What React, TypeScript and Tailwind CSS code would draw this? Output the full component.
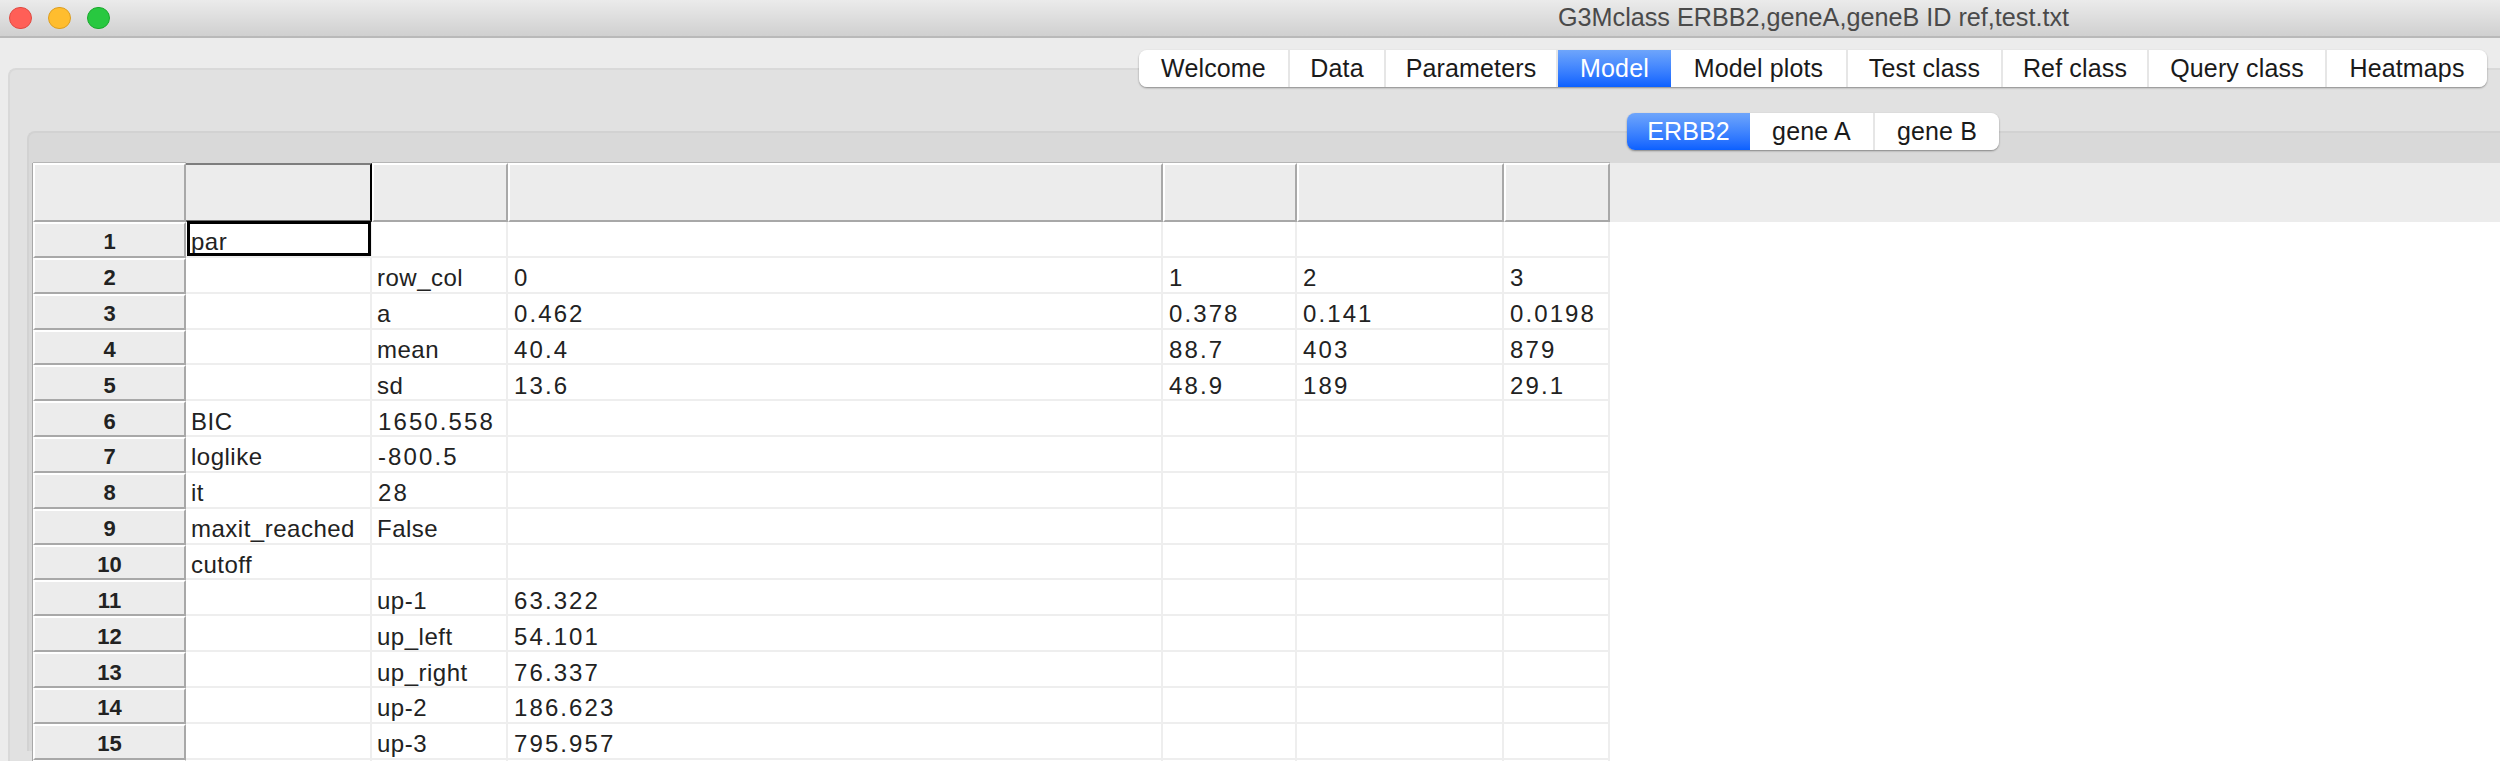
const font = "font-['Liberation_Sans',Arial,sans-serif]";

const mainTabs = [
  { label: "Welcome", w: "w-[151px]", first: true },
  { label: "Data", w: "w-[96px]" },
  { label: "Parameters", w: "w-[172px]" },
  { label: "Model", w: "w-[113px]", active: true },
  { label: "Model plots", w: "w-[177px]" },
  { label: "Test class", w: "w-[155px]" },
  { label: "Ref class", w: "w-[146px]" },
  { label: "Query class", w: "w-[178px]" },
  { label: "Heatmaps", w: "w-[160px]", last: true },
];

const subTabs = [
  { label: "ERBB2", w: "w-[123px]", active: true, first: true },
  { label: "gene A", w: "w-[125px]" },
  { label: "gene B", w: "w-[124px]", last: true },
];

const colW = ["w-[186px]", "w-[136px]", "w-[655px]", "w-[134px]", "w-[207px]", "w-[106px]"];

const rows: string[][] = [
  ["par", "", "", "", "", ""],
  ["", "row_col", "0", "1", "2", "3"],
  ["", "a", "0.462", "0.378", "0.141", "0.0198"],
  ["", "mean", "40.4", "88.7", "403", "879"],
  ["", "sd", "13.6", "48.9", "189", "29.1"],
  ["BIC", "1650.558", "", "", "", ""],
  ["loglike", "-800.5", "", "", "", ""],
  ["it", "28", "", "", "", ""],
  ["maxit_reached", "False", "", "", "", ""],
  ["cutoff", "", "", "", "", ""],
  ["", "up-1", "63.322", "", "", ""],
  ["", "up_left", "54.101", "", "", ""],
  ["", "up_right", "76.337", "", "", ""],
  ["", "up-2", "186.623", "", "", ""],
  ["", "up-3", "795.957", "", "", ""],
  ["", "", "", "", "", ""],
];

function Segmented({ tabs }: { tabs: { label: string; w: string; active?: boolean; first?: boolean; last?: boolean }[] }) {
  return (
    <div className="flex h-[37px] rounded-[8px] shadow-[0_1px_2px_rgba(0,0,0,0.4)]">
      {tabs.map((t) => (
        <div
          key={t.label}
          className={`${t.w} flex items-center justify-center text-[25px] leading-none tracking-[0.15px] ${
            t.first ? "rounded-l-[8px]" : ""
          } ${t.last ? "rounded-r-[8px]" : ""} ${
            t.active
              ? "bg-gradient-to-b from-[#6ea5fb] to-[#0a60ff] text-white"
              : `bg-white text-[#1a1a1a] ${t.last ? "" : "border-r-2 border-[#e6e6e6]"}`
          }`}
        >
          {t.label}
        </div>
      ))}
    </div>
  );
}

export default function App() {
  return (
    <div className={`${font} h-[761px] w-[2500px] overflow-hidden bg-[#ececec]`}>
      <div className="flex h-[38px] items-center border-b-2 border-[#b9b9b9] bg-gradient-to-b from-[#ebebeb] to-[#d0d0d0] pl-[9px]">
        <div className="flex gap-[16px]">
          <div className="h-[22px] w-[23px] rounded-full border border-[#e04a42] bg-[#ff5f57]" />
          <div className="h-[22px] w-[23px] rounded-full border border-[#dd9e20] bg-[#ffbd2e]" />
          <div className="h-[22px] w-[23px] rounded-full border border-[#1aa92c] bg-[#28c840]" />
        </div>
        <div className="ml-[1448px] whitespace-nowrap text-[25.2px] leading-none text-[#4a4a4a]">
          G3Mclass ERBB2,geneA,geneB ID ref,test.txt
        </div>
      </div>

      <div className="relative z-10 mt-[12px] flex justify-end pr-[13px]">
        <Segmented tabs={mainTabs} />
      </div>

      <div className="-mt-[19px] ml-[8px] h-[700px] rounded-tl-[8px] border-t-2 border-l-2 border-[#d9d9d9] bg-[#e1e1e1] pt-[43px]">
        <div className="relative z-10 ml-[1617px] flex">
          <Segmented tabs={subTabs} />
        </div>

        <div className="-mt-[19px] ml-[17px] h-[620px] rounded-tl-[8px] border-t-2 border-l-2 border-[#d2d2d2] bg-[#d9d9d9] pt-[30px] pl-[3px]">
          <div className="border-l border-[#a8a8a8]">
            <div className="flex h-[59px] bg-[#ececec]">
              <div className="h-full w-[153px] border-2 border-t-white border-r-[#a8a8a8] border-b-[#a8a8a8] border-l-white shadow-[0_-1px_0_#b5b5b5]" />
              {colW.map((w, i) => (
                <div
                  key={w}
                  className={`${w} h-full border-t-2 border-r-2 border-b-2 ${
                    i === 0
                      ? "border-t-[#7d7d7d] border-r-black border-b-[#6f6f6f]"
                      : "border-l-2 border-t-white border-r-[#a8a8a8] border-b-[#a8a8a8] border-l-white shadow-[0_-1px_0_#b5b5b5]"
                  }`}
                />
              ))}
            </div>

            {rows.map((r, ri) => (
              <div key={ri} className="flex h-[35.85px] bg-white">
                <div className="flex h-full w-[153px] items-center justify-center border-2 border-t-white border-r-[#a8a8a8] border-b-[#a8a8a8] border-l-white bg-[#ececec] pt-[5px] text-[22px] leading-none font-bold text-[#222222]">
                  {ri < 15 ? ri + 1 : ""}
                </div>
                {r.map((c, ci) => (
                  <div
                    key={ci}
                    className={`${colW[ci]} relative flex h-full items-center border-r-2 border-b-2 border-[#eeeeee] pt-[7px] text-[24px] leading-none whitespace-nowrap text-[#222222] ${
                      /^-?[\d.]+$/.test(c) ? "pl-[6px] tracking-[2.1px]" : "pl-[5px] tracking-[0.5px]"
                    }`}
                  >
                    {c}
                    {ri === 0 && ci === 0 ? (
                      <div className="absolute -top-[1px] left-[1px] h-[35px] w-[184px] border-[3px] border-black" />
                    ) : null}
                  </div>
                ))}
              </div>
            ))}
          </div>
        </div>
      </div>
    </div>
  );
}
